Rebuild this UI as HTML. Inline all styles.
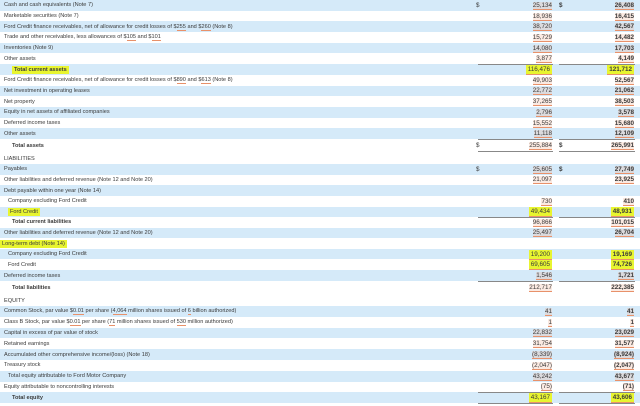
<!DOCTYPE html>
<html><head><meta charset="utf-8"><style>
body{margin:0;width:640px;height:406px;overflow:hidden;background:#fff;font-family:"Liberation Sans",sans-serif;font-size:6.3px;color:#3a3a3a}
.r{position:absolute;left:0;width:640px}
.b{background:#d5eaf9}
.l{position:absolute;left:4px;white-space:nowrap;font-size:5.6px}
.i1{left:8px}.i2{left:12px;font-weight:bold}
.d{position:absolute;left:476px}.d2{position:absolute;left:559px}
.n1,.n2{position:absolute;text-align:right;width:70px}
.n1{left:482px}.n2{left:564px;font-weight:bold}
.n1 span,.n2 span{border-bottom:1px solid #e8916a;background:rgba(240,170,140,.25)}
.hl{background:#e8f530!important;padding:1px 2px}
.ln{position:absolute;height:1px;background:#888}
.o{border-bottom:1px solid #e8916a;text-decoration:none}
</style></head><body>
<div id="c"></div>
<script>
const rows=[
[0,10.7,1,"Cash and cash equivalents (Note 7)","25,134","26,408",1],
[10.7,10.7,0,"Marketable securities (Note 7)","18,936","16,415"],
[21.4,10.7,1,"Ford Credit finance receivables, net of allowance for credit losses of $<u class=o>255</u> and $<u class=o>260</u> (Note 8)","38,720","42,567"],
[32.1,10.7,0,"Trade and other receivables, less allowances of $<u class=o>105</u> and $<u class=o>101</u>","15,729","14,482"],
[42.8,10.7,1,"Inventories (Note 9)","14,080","17,703"],
[53.5,10.7,0,"Other assets","3,877","4,149"],
[64.2,10.7,1,"<span class=hl>Total current assets</span>","116,476","121,712",0,2,1],
[74.9,10.7,0,"Ford Credit finance receivables, net of allowance for credit losses of $<u class=o>890</u> and $<u class=o>613</u> (Note 8)","49,903","52,567"],
[85.6,10.7,1,"Net investment in operating leases","22,772","21,062"],
[96.3,10.7,0,"Net property","37,265","38,503"],
[107,10.7,1,"Equity in net assets of affiliated companies","2,796","3,578"],
[117.7,10.7,0,"Deferred income taxes","15,552","15,680"],
[128.4,10.7,1,"Other assets","11,118","12,109"],
[139.1,13,0,"Total assets","255,884","265,991",1,2],
[152.1,12,0,"LIABILITIES","","",0,0],
[164.1,10.6,1,"Payables","25,605","27,749",1],
[174.7,10.6,0,"Other liabilities and deferred revenue (Note 12 and Note 20)","21,097","23,925"],
[185.3,10.6,1,"Debt payable within one year (Note 14)","",""],
[195.9,10.6,0,"Company excluding Ford Credit","730","410",0,1],
[206.5,10.6,1,"<span class=hl>Ford Credit</span>","49,434","48,931",0,1,1],
[217.1,10.6,0,"Total current liabilities","96,866","101,015",0,2],
[227.7,10.6,1,"Other liabilities and deferred revenue (Note 12 and Note 20)","25,497","26,704"],
[238.3,10.6,0,"<span class=hl style='margin-left:-4px'>Long-term debt (Note 14)</span>","",""],
[248.9,10.6,1,"Company excluding Ford Credit","19,200","19,169",0,1,1],
[259.5,10.6,0,"Ford Credit","69,605","74,726",0,1,1],
[270.1,10.9,1,"Deferred income taxes","1,546","1,721"],
[281,13,0,"Total liabilities","212,717","222,385",0,2],
[294,12,0,"EQUITY","",""],
[306,10.8,1,"Common Stock, par value $<u class=o>0.01</u> per share (<u class=o>4,064</u> million shares issued of <u class=o>6</u> billion authorized)","41","41"],
[316.8,10.8,0,"Class B Stock, par value $<u class=o>0.01</u> per share (<u class=o>71</u> million shares issued of <u class=o>530</u> million authorized)","1","1"],
[327.6,10.8,1,"Capital in excess of par value of stock","22,832","23,029"],
[338.4,10.8,0,"Retained earnings","31,754","31,577"],
[349.2,10.8,1,"Accumulated other comprehensive income/(loss) (Note 18)","(8,339)","(8,924)"],
[360,10.8,0,"Treasury stock","(2,047)","(2,047)"],
[370.8,10.8,1,"Total equity attributable to Ford Motor Company","43,242","43,677",0,1],
[381.6,10.8,0,"Equity attributable to noncontrolling interests","(75)","(71)"],
[392.4,10.8,1,"Total equity","43,167","43,606",0,2,1]];
let h="";
for(const r of rows){
 const [t,ht,b,lab,v1,v2,dol,ind,hl]=r;
 const ty=(ht-7)/2;
 h+=`<div class="r${b?' b':''}" style="top:${t}px;height:${ht}px">`;
 let cls=ind==2?'l i2':ind==1?'l i1':'l';
 if(lab=="LIABILITIES"||lab=="EQUITY")cls='l" style="top:'+(ht-8)+'px;font-weight:normal';
 h+=`<div class="${cls}" ${cls.indexOf('style')<0?`style="top:${ty+0.5}px"`:''}>${lab}</div>`;
 if(dol){h+=`<div class=d style="top:${ty}px">$</div><div class=d2 style="top:${ty}px;font-weight:bold">$</div>`;}
 if(v1)h+=`<div class=n1 style="top:${ty}px"><span class="${hl?'hl':''}">${v1}</span></div>`;
 if(v2)h+=`<div class=n2 style="top:${ty}px"><span class="${hl?'hl':''}">${v2}</span></div>`;
 h+=`</div>`;
}
for(const y of [63.7,138.6,151,216.6,280.5,391.9,403]){
 h+=`<div class=ln style="top:${y}px;left:478px;width:75px"></div><div class=ln style="top:${y}px;left:559px;width:76px"></div>`;
}
document.getElementById('c').innerHTML=h;
</script>
</body></html>
